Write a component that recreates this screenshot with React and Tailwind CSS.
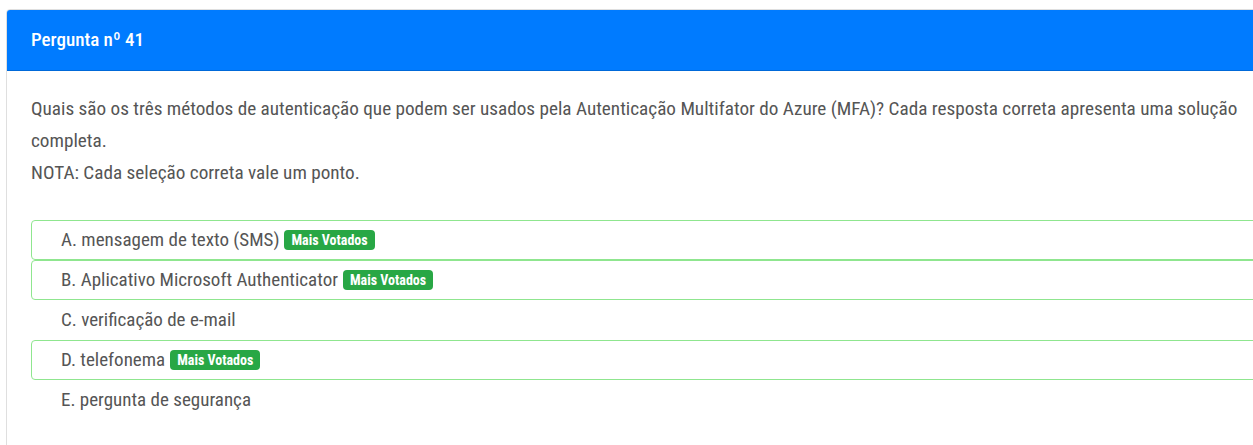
import React from "react";

const options = [
  { l: "A.", t: "mensagem de texto (SMS)", v: true },
  { l: "B.", t: "Aplicativo Microsoft Authenticator", v: true },
  { l: "C.", t: "verificação de e-mail", v: false },
  { l: "D.", t: "telefonema", v: true },
  { l: "E.", t: "pergunta de segurança", v: false },
];

export default function App() {
  return (
    <div
      className="w-[1253px] h-[445px] overflow-hidden bg-white pl-[6px] pt-[9px]"
      style={{ fontFamily: '"Roboto Condensed", "Liberation Sans Narrow", Roboto, sans-serif' }}
    >
      <div className="w-[1300px] h-[500px] border border-[#dfdfdf] rounded-[4px] overflow-hidden">
        <div className="h-[61px] bg-[#007bff] flex items-center px-6 text-white text-[19px] font-medium border-b border-[#0069d9]">
          Pergunta nº 41
        </div>
        <div className="px-6 pt-[22px] text-[19.2px] leading-[32px] text-[#555]">
          <div className="w-[1215px]">
            Quais são os três métodos de autenticação que podem ser usados pela Autenticação Multifator do Azure (MFA)? Cada resposta correta apresenta uma solução completa.
            <br />
            NOTA: Cada seleção correta vale um ponto.
          </div>
          <div className="mt-[31px] flex flex-col">
            {options.map((o) => (
              <div
                key={o.l}
                className={`h-[40px] flex items-center pl-[29px] rounded-[4px] border ${o.v ? "border-[#8fe68f]" : "border-transparent"} text-[19px] text-[#555]`}
              >
                <span>
                  {o.l} {o.t}
                </span>
                {o.v && (
                  <span className="ml-[5px] h-[20px] px-[7px] flex items-center rounded-[4px] bg-[#28a745] text-white text-[14px] font-bold">
                    Mais Votados
                  </span>
                )}
              </div>
            ))}
          </div>
        </div>
      </div>
    </div>
  );
}
